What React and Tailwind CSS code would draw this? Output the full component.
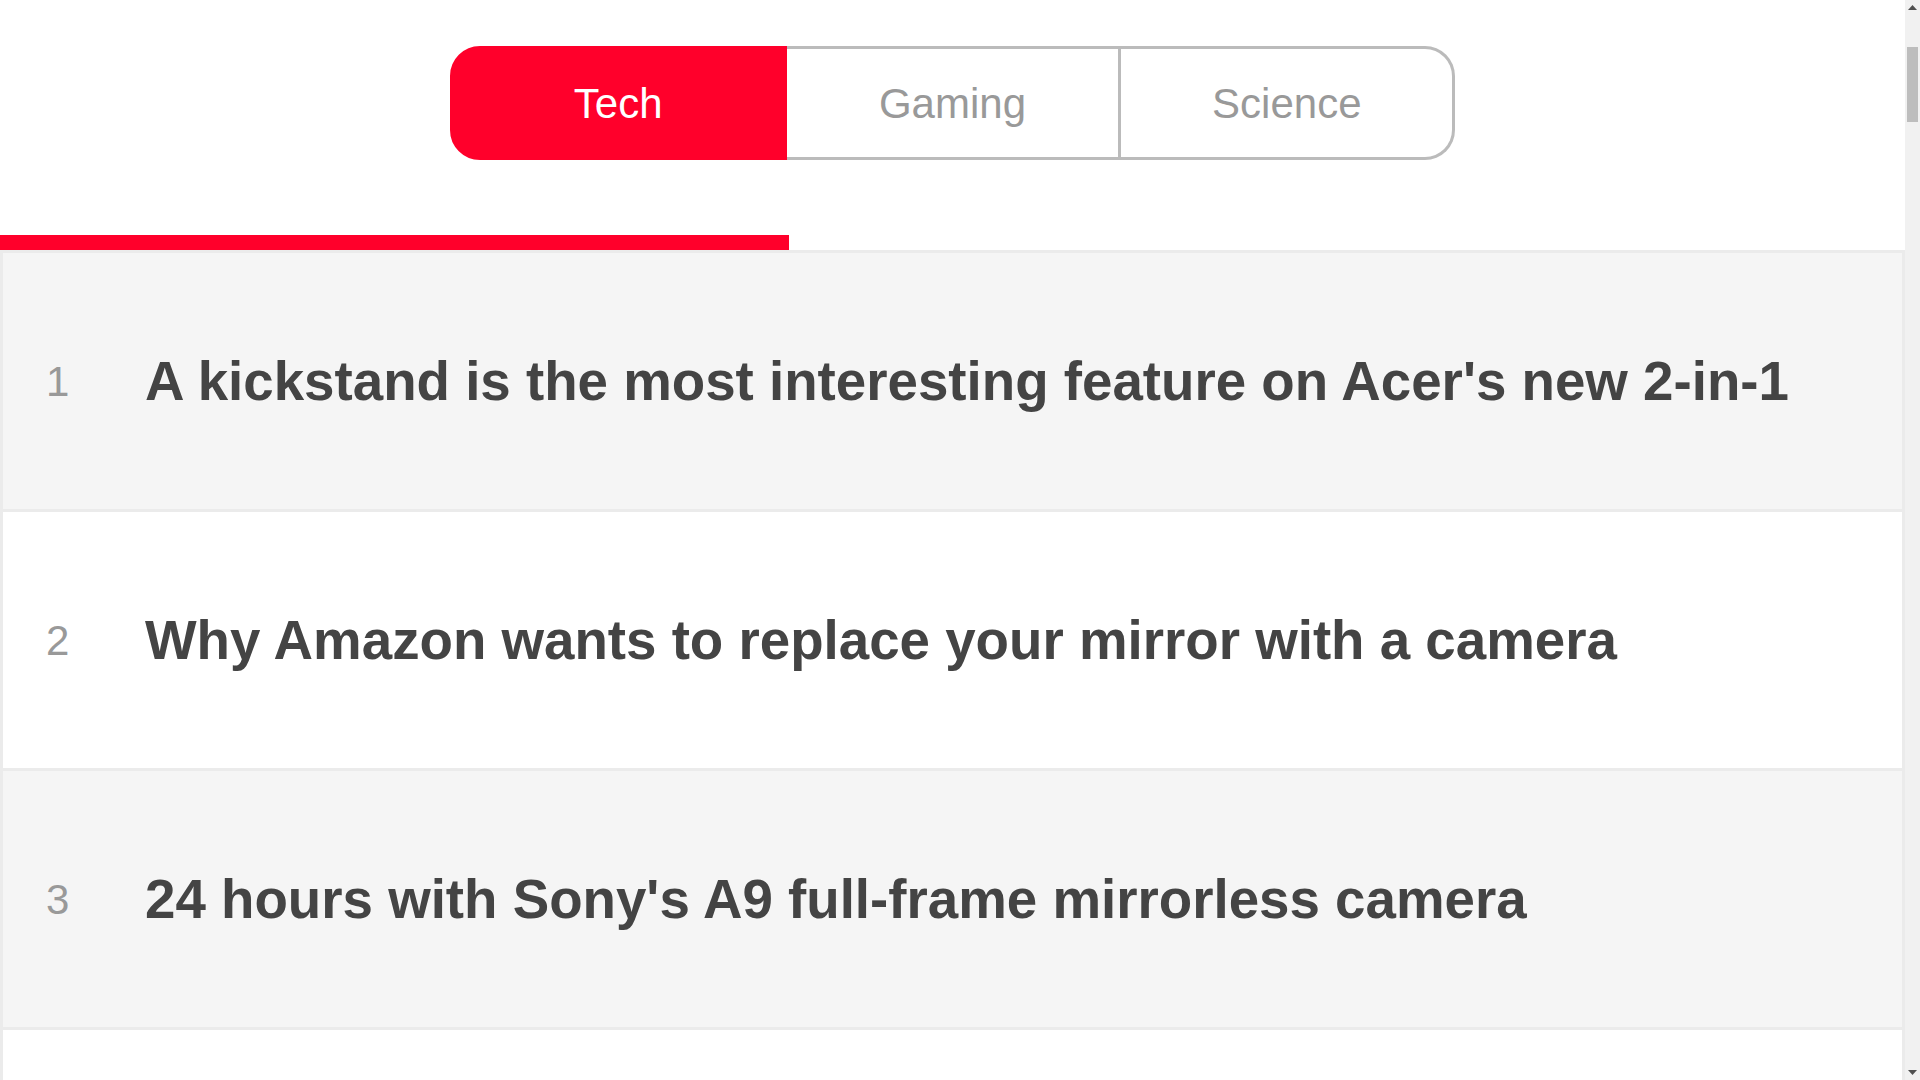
import { useState } from "react";

const tabs = ["Tech", "Gaming", "Science"];

const articles = [
  "A kickstand is the most interesting feature on Acer's new 2-in-1",
  "Why Amazon wants to replace your mirror with a camera",
  "24 hours with Sony's A9 full-frame mirrorless camera",
  "Google's new Chromebook is thin, light and very expensive",
  "The best wireless earbuds you can buy right now",
  "Microsoft's Surface Laptop puts Windows 10 S front and center",
  "Samsung's Galaxy S8 review: the phone to beat this year",
  "Fitbit's first smartwatch is finally coming this fall",
  "Tesla's solar roof tiles are now available to order",
  "Apple's HomePod wants to be the center of your living room",
  "Lenovo's new Yoga laptops get thinner bezels and better pens",
  "Everything Nintendo showed off during its latest Direct",
];

function Tabs({ active, onSelect }) {
  return (
    <div className="flex justify-center pt-[46px]">
      <div className="flex h-[114px] w-[1006px]">
        {tabs.map((t, i) => {
          const isActive = active === i;
          const first = i === 0;
          const last = i === tabs.length - 1;
          return (
            <button
              key={t}
              onClick={() => onSelect(i)}
              className={
                "flex flex-1 items-center justify-center border-y-[3px] border-r-[3px] text-[42px] " +
                (first ? "rounded-l-[30px] border-l-[3px] " : "") +
                (last ? "rounded-r-[30px] " : "") +
                (isActive
                  ? "border-[#ff002b] bg-[#ff002b] text-white"
                  : "border-[#bbbbbb] bg-white text-[#999999]")
              }
            >
              {t}
            </button>
          );
        })}
      </div>
    </div>
  );
}

// window scrollbar as it shows in the screenshot
function ScrollBar() {
  return (
    <div className="flex h-screen w-[15px] shrink-0 flex-col items-center bg-[#f1f1f1]">
      <div className="flex h-[15px] items-center justify-center">
        <svg width="9" height="5" viewBox="0 0 9 5">
          <path d="M4.5 0 L9 5 L0 5 Z" fill="#505050" />
        </svg>
      </div>
      <div className="mt-[32px] h-[75px] w-[11px] bg-[#bdbdbd]" />
      <div className="flex-1" />
      <div className="flex h-[15px] items-center justify-center">
        <svg width="9" height="5" viewBox="0 0 9 5">
          <path d="M0 0 L9 0 L4.5 5 Z" fill="#505050" />
        </svg>
      </div>
    </div>
  );
}

export default function App() {
  const [active, setActive] = useState(0);

  return (
    <div className="flex h-screen overflow-hidden bg-white font-['Liberation_Sans',Arial,sans-serif]">
      <main className="min-w-0 flex-1 overflow-y-auto [scrollbar-width:none]">
        <Tabs active={active} onSelect={setActive} />

        {/* indicator */}
        <div className="mt-[75px] h-[15px] w-[789px] bg-[#ff002b]" />

        <ul className="border-t-[3px] border-[#ebebeb]">
          {articles.map((title, i) => (
            <li
              key={i}
              className={
                "flex h-[259px] items-center border-x-[3px] border-b-[3px] border-[#ebebeb] pl-[43px] " +
                (i % 2 === 0 ? "bg-[#f5f5f5]" : "bg-white")
              }
            >
              <span className="w-[99px] shrink-0 text-[42px] text-[#999999]">{i + 1}</span>
              <h3 className="text-[54.7px] font-bold text-[#444444]">{title}</h3>
            </li>
          ))}
        </ul>
      </main>
      <ScrollBar />
    </div>
  );
}
